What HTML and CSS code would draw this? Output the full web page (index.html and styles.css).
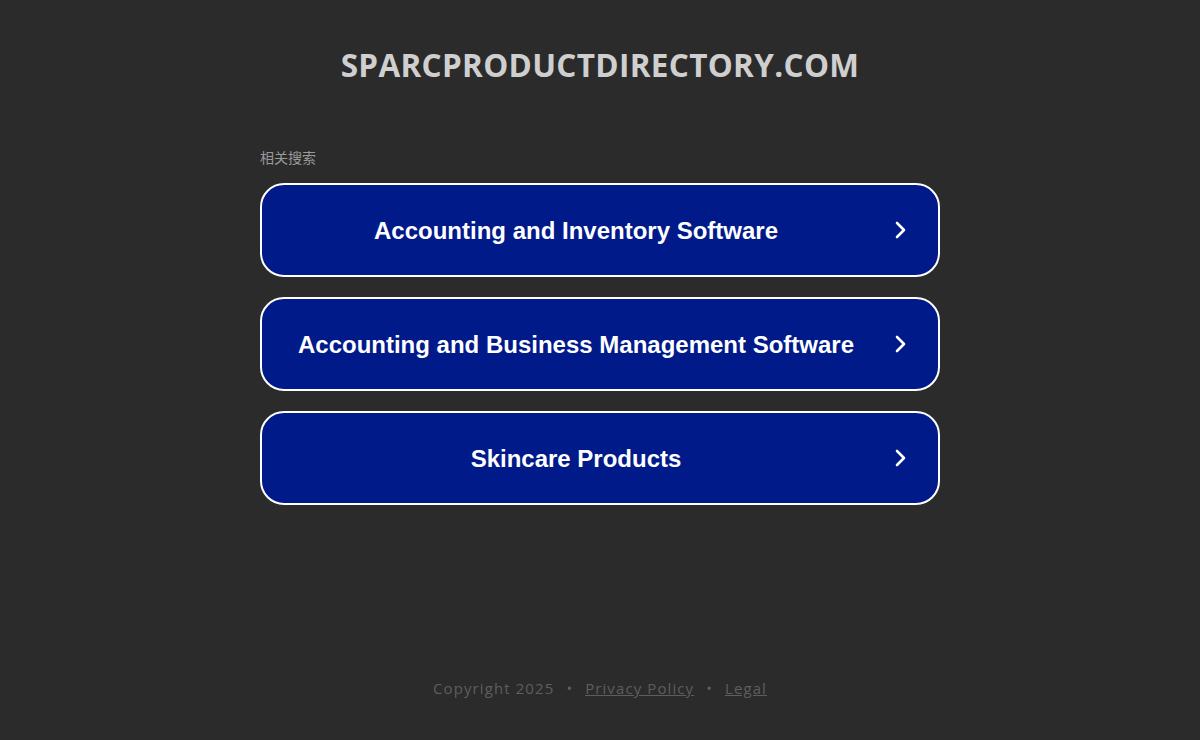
FILE: index.html
```html
<!DOCTYPE html>
<html>
<head>
<meta charset="utf-8">
<link rel="stylesheet" href="styles.css">
</head>
<body>
<div class="page">
  <header class="header">
    <h1 class="domain">SPARCPRODUCTDIRECTORY.COM</h1>
  </header>
  <main class="main">
    <div class="label">相关搜索</div>
    <div class="links">
      <a class="link" href="#"><span class="link-text">Accounting and Inventory Software</span><svg class="chev" viewBox="0 0 24 24" width="24" height="24"><path d="M9 5l7 7-7 7" fill="none" stroke="#fff" stroke-width="2.6" stroke-linecap="round" stroke-linejoin="round"/></svg></a>
      <a class="link" href="#"><span class="link-text">Accounting and Business Management Software</span><svg class="chev" viewBox="0 0 24 24" width="24" height="24"><path d="M9 5l7 7-7 7" fill="none" stroke="#fff" stroke-width="2.6" stroke-linecap="round" stroke-linejoin="round"/></svg></a>
      <a class="link" href="#"><span class="link-text">Skincare Products</span><svg class="chev" viewBox="0 0 24 24" width="24" height="24"><path d="M9 5l7 7-7 7" fill="none" stroke="#fff" stroke-width="2.6" stroke-linecap="round" stroke-linejoin="round"/></svg></a>
    </div>
  </main>
  <footer class="footer">
    <span>Copyright 2025</span><span class="dot">•</span><a class="flink" href="#">Privacy Policy</a><span class="dot">•</span><a class="flink" href="#">Legal</a>
  </footer>
</div>
</body>
</html>
```
FILE: styles.css
```css
html, body {
  margin: 0;
  padding: 0;
  background: #2b2b2b;
}
.page {
  width: 1200px;
  height: 740px;
  display: flex;
  flex-direction: column;
  align-items: center;
}
.header {
  padding-top: 44px;
  height: 100px;
  box-sizing: border-box;
}
.domain {
  margin: 0;
  font-family: "Open Sans", "Liberation Sans", sans-serif;
  font-weight: 700;
  font-size: 31.5px;
  line-height: 42px;
  color: #cfcfcf;
  letter-spacing: 0.32px;
}
.main {
  width: 680px;
  padding-top: 48px;
}
.label {
  font-family: "Noto Sans CJK SC", sans-serif;
  font-size: 14px;
  line-height: 18px;
  color: #9a9a9a;
  margin-bottom: 17px;
}
.links {
  display: flex;
  flex-direction: column;
  gap: 20px;
}
.link {
  position: relative;
  display: flex;
  align-items: center;
  justify-content: center;
  height: 94px;
  box-sizing: border-box;
  border: 2px solid #ffffff;
  border-radius: 24px;
  background: #011a8a;
  text-decoration: none;
  padding: 2px 68px 0 20px;
}
.link-text {
  font-family: "Liberation Sans", Arial, sans-serif;
  font-weight: 700;
  font-size: 24px;
  color: #ffffff;
}
.chev {
  position: absolute;
  right: 26px;
  top: 50%;
  margin-top: -12px;
}
.footer {
  margin-top: auto;
  padding-bottom: 42px;
  font-family: "Open Sans", "DejaVu Sans", sans-serif;
  font-size: 15px;
  line-height: 20px;
  color: #5e5e5e;
  letter-spacing: 1.1px;
}
.dot {
  margin: 0 12px;
}
.flink {
  color: #5e5e5e;
  text-decoration: underline;
}
```
